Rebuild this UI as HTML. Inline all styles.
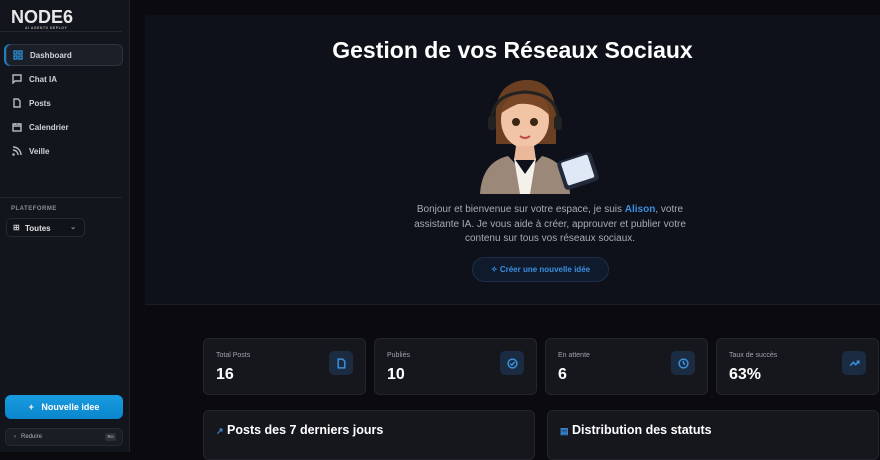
<!DOCTYPE html>
<html><head><meta charset="utf-8"><style>
*{margin:0;padding:0;box-sizing:border-box}
body{width:880px;height:452px;overflow:hidden;background:#0b0b0f;font-family:"Liberation Sans",sans-serif;color:#e5e7eb;position:relative}
.sb{position:absolute;left:0;top:0;width:130px;height:452px;background:#12151c;border-right:1px solid #1e222b}
.logo{position:absolute;left:11px;top:7px;font-weight:bold;font-size:18px;color:#e8e8e8;letter-spacing:0px}
.logo small{position:absolute;left:14px;top:19px;font-size:3.5px;color:#aaa;letter-spacing:.5px;white-space:nowrap}
.hr{position:absolute;left:0;width:122px;height:1px;background:#222630}
.nav{position:absolute;left:6px;width:117px;height:22px;font-size:8px;font-weight:bold;color:#d0d3d9;display:flex;align-items:center;padding-left:6px;gap:7px}
.nav svg{width:10px;height:10px;stroke:#b5b9c2;fill:none;stroke-width:1.4}
.act{background:#1b1f27;border:1px solid #2e3440;border-radius:6px;box-shadow:-2px 0 0 #1f7fc4}
.act svg{stroke:#2a8ad0}
.main{position:absolute;left:145px;top:15px;width:735px;height:290px;background:#0e111a;border-bottom:1px solid #1a1d25}
h1{position:absolute;left:145px;width:735px;top:37px;text-align:center;font-size:23px;color:#fff;font-weight:bold}
.card{position:absolute;top:338px;width:163px;height:57px;background:#16171d;border:1px solid #24262e;border-radius:6px}
.card .l{position:absolute;left:12px;top:13px;font-size:7px;color:#a0a3ab}
.card .v{position:absolute;left:12px;top:27px;font-size:16px;font-weight:bold;color:#fff}
.card .ic{position:absolute;right:12px;top:12px;width:24px;height:24px;border-radius:5px;background:#1a2b42;display:flex;align-items:center;justify-content:center}
.card .ic svg{width:11px;height:11px;stroke:#3a8fd8;fill:none;stroke-width:1.4}
.pan{position:absolute;top:410px;height:50px;background:#16171d;border:1px solid #24262e;border-radius:6px;font-size:12.5px;font-weight:bold;color:#fff;padding:12px 12px}
</style></head><body>
<div class="sb">
<div class="logo">NODE6<small>AI AGENTS DEPLOY</small></div>
<div class="hr" style="top:31px"></div>
<div class="nav act" style="top:44px"><svg viewBox="0 0 10 10"><rect x="1" y="1" width="3" height="3"/><rect x="6" y="1" width="3" height="3"/><rect x="1" y="6" width="3" height="3"/><rect x="6" y="6" width="3" height="3"/></svg>Dashboard</div>
<div class="nav" style="top:68px"><svg viewBox="0 0 10 10"><path d="M1 1h8v6H3L1 9z"/></svg>Chat IA</div>
<div class="nav" style="top:92px"><svg viewBox="0 0 10 10"><path d="M2 1h4l2 2v6H2z"/></svg>Posts</div>
<div class="nav" style="top:116px"><svg viewBox="0 0 10 10"><rect x="1" y="2" width="8" height="7"/><path d="M3 1v2M7 1v2M1 4h8"/></svg>Calendrier</div>
<div class="nav" style="top:140px"><svg viewBox="0 0 10 10"><path d="M1 1a8 8 0 0 1 8 8M1 4a5 5 0 0 1 5 5"/><circle cx="1.5" cy="8.5" r=".6"/></svg>Veille</div>
<div class="hr" style="top:197px"></div>
<div style="position:absolute;left:11px;top:206px;font-size:6px;color:#8a8f99;letter-spacing:.5px;font-weight:bold">PLATEFORME</div>
<div style="position:absolute;left:6px;top:218px;width:79px;height:19px;border:1px solid #252932;border-radius:5px;background:#101319;font-size:8px;font-weight:bold;color:#e0e0e0;padding:5px 0 0 18px">Toutes<span style="position:absolute;right:8px;top:4px;color:#999;font-size:7px">⌄</span><span style="position:absolute;left:6px;top:4px;font-size:8px;color:#ccc">⊞</span></div>
<div style="position:absolute;left:5px;top:395px;width:118px;height:24px;border-radius:6px;background:linear-gradient(#1a9be0,#0a86cc);color:#fff;font-size:9px;font-weight:bold;text-align:center;line-height:24px">+&nbsp;&nbsp; Nouvelle idee</div>
<div style="position:absolute;left:5px;top:428px;width:118px;height:18px;border-radius:5px;background:#1a1d24;border:1px solid #262a32;font-size:6px;color:#b0b3ba;padding:5px 0 0 8px">‹&nbsp;&nbsp; Reduire<span style="position:absolute;right:6px;top:4px;width:11px;height:8px;background:#2c3038;border-radius:2px;font-size:4px;text-align:center;line-height:8px">⌘B</span></div>
</div>
<div class="main"></div>
<h1>Gestion de vos Réseaux Sociaux</h1>
<svg style="position:absolute;left:478px;top:74px" width="122" height="120" viewBox="0 0 122 120">
<path d="M18 50 Q14 10 46 6 Q80 4 78 50 L78 70 L18 70z" fill="#6b3f22"/>
<ellipse cx="47" cy="46" rx="24" ry="28" fill="#f1c4a6"/>
<path d="M22 40 Q30 14 58 18 Q70 24 72 42 Q60 28 40 30 Q30 34 22 40z" fill="#7a4726"/>
<circle cx="38" cy="48" r="4" fill="#3a2414"/><circle cx="56" cy="48" r="4" fill="#3a2414"/>
<path d="M42 62 Q47 66 52 62" stroke="#c04a4a" stroke-width="2" fill="none"/>
<path d="M14 46 Q14 20 47 18 Q80 20 80 46" stroke="#222" stroke-width="3" fill="none"/>
<rect x="10" y="42" width="8" height="14" rx="3" fill="#222"/><rect x="76" y="42" width="8" height="14" rx="3" fill="#222"/>
<path d="M38 72 L56 72 L58 86 L36 86z" fill="#eab89a"/>
<path d="M2 120 Q4 88 30 82 L47 100 L64 82 Q90 88 92 120z" fill="#9c8878"/>
<path d="M36 84 L47 100 L58 84 L52 120 L42 120z" fill="#f4f0ea"/>
<rect x="82" y="82" width="36" height="30" rx="4" fill="#222a3a" transform="rotate(-18 100 97)"/>
<rect x="86" y="84" width="28" height="24" rx="2" fill="#dfe8f5" transform="rotate(-18 100 97)"/>
</svg>
<div style="position:absolute;left:402px;width:296px;top:203px;text-align:center;font-size:10px;line-height:14.5px;color:#a6abb5">Bonjour et bienvenue sur votre espace, je suis <b style="color:#3b8fe0">Alison</b>, votre assistante IA. Je vous aide à créer, approuver et publier votre contenu sur tous vos réseaux sociaux.</div>
<div style="position:absolute;left:472px;top:257px;width:137px;height:25px;border-radius:13px;background:#0f1b2c;border:1px solid #1d2e46;color:#3b8fe0;font-size:8px;font-weight:bold;text-align:center;line-height:24px">✧ Créer une nouvelle idée</div>
<div class="card" style="left:203px"><div class="l">Total Posts</div><div class="v">16</div><div class="ic"><svg viewBox="0 0 10 10"><path d="M2 1h4l2 2v6H2z"/></svg></div></div>
<div class="card" style="left:374px"><div class="l">Publiés</div><div class="v">10</div><div class="ic"><svg viewBox="0 0 10 10"><circle cx="5" cy="5" r="4"/><path d="M3 5l1.5 1.5L7 3.5"/></svg></div></div>
<div class="card" style="left:545px"><div class="l">En attente</div><div class="v">6</div><div class="ic"><svg viewBox="0 0 10 10"><circle cx="5" cy="5" r="4"/><path d="M5 2.5V5l1.5 1"/></svg></div></div>
<div class="card" style="left:716px"><div class="l">Taux de succès</div><div class="v">63%</div><div class="ic"><svg viewBox="0 0 10 10"><path d="M1 7l3-3 2 2 3-3M7 3h2v2"/></svg></div></div>
<div class="pan" style="left:203px;width:332px"><span style="color:#3b8fe0;font-size:9px">↗</span> Posts des 7 derniers jours</div>
<div class="pan" style="left:547px;width:332px"><span style="color:#3b8fe0;font-size:9px">▤</span> Distribution des statuts</div>
</body></html>
